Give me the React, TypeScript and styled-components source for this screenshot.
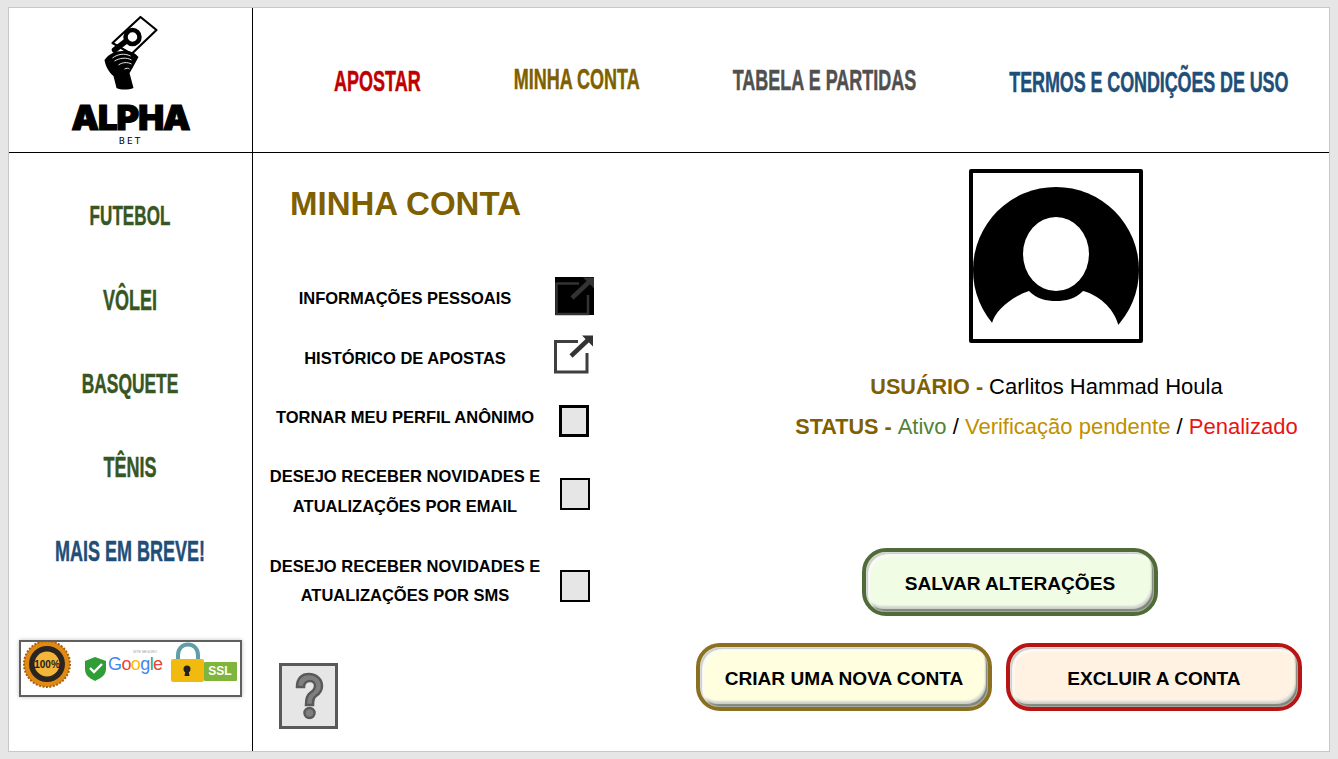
import { type FC } from 'react';
import styled, { createGlobalStyle } from 'styled-components';

const GlobalStyle = createGlobalStyle`
  html, body { margin: 0; padding: 0; background: #e6e6e6; }
  body { font-family: "Liberation Sans", Arial, sans-serif; color: #000; }
`;

const Frame = styled.div`
  box-sizing: border-box;
  width: 1322px;
  height: 745px;
  margin: 7px 0 0 8px;
  background: #fff;
  border: 1px solid #c8c8c8;
  display: grid;
  grid-template-columns: 244px 1fr;
  grid-template-rows: 145px 1fr;
`;

const LogoCell = styled.div`
  border-right: 1px solid #000;
  border-bottom: 1px solid #000;
  display: flex;
  flex-direction: column;
  align-items: center;
`;

const LogoMark = styled.svg`
  width: 70px;
  height: 84px;
  flex: none;
  margin-top: 2px;
`;

const LogoName = styled.div`
  font-family: Inter, "Liberation Sans", sans-serif;
  font-weight: 900;
  font-size: 34.5px;
  line-height: 30px;
  height: 30px;
  margin-top: 9px;
  letter-spacing: -1px;
  -webkit-text-stroke: 1.2px #000;
`;

const LogoSub = styled.div`
  font-family: "DejaVu Sans", sans-serif;
  font-size: 9px;
  line-height: 9px;
  letter-spacing: 2px;
  margin-top: 4px;
`;

const TopNav = styled.nav`
  border-bottom: 1px solid #000;
  display: flex;
  gap: 93px;
  padding: 3px 0 0 81px;
  align-items: center;
`;

// the reference's display face is condensed, so the text is stretched upward
const DisplayText = styled.span<{ $color: string; $nudge?: number; $track?: number; $size?: number }>`
  display: inline-block;
  font-family: "Liberation Sans", sans-serif;
  font-size: ${(p) => p.$size ?? 18}px;
  font-weight: 700;
  color: ${(p) => p.$color};
  letter-spacing: ${(p) => p.$track ?? 0}px;
  white-space: nowrap;
  -webkit-text-stroke: 0.3px ${(p) => p.$color};
  transform: translateY(${(p) => p.$nudge ?? 0}px) scaleY(1.6);
`;

const SideNav = styled.aside`
  border-right: 1px solid #000;
  display: flex;
  flex-direction: column;
  align-items: center;
  padding-top: 52px;
`;

const SideItem = styled(DisplayText)`
  height: 84px;
  line-height: 20px;
  transform-origin: center 10px;
  margin-right: 1px;
`;

const SealBox = styled.div`
  box-sizing: border-box;
  width: 223px;
  height: 57px;
  margin: 15px 0 0 -1px;
  border: 2px solid #5f5f5f;
  box-shadow: 0 0 4px rgba(0, 0, 0, 0.25);
`;

const SealArt = styled.svg`
  display: block;
  width: 219px;
  height: 53px;
`;

const Main = styled.main`
  display: grid;
  grid-template-columns: 443px 1fr;
`;

const AccountColumn = styled.section`
  display: flex;
  flex-direction: column;
  padding-top: 32px;
`;

const Title = styled.h1`
  margin: 0 0 60px 37px;
  font-size: 33px;
  line-height: 38px;
  font-weight: 700;
  color: #7f6000;
`;

const OptionRow = styled.div<{ $height: number }>`
  display: grid;
  grid-template-columns: 304px 1fr;
  height: ${(p) => p.$height}px;
  align-items: start;
`;

const OptionLabel = styled.div<{ $leading?: number; $drop?: number }>`
  text-align: center;
  font-size: 16.5px;
  font-weight: 700;
  line-height: ${(p) => p.$leading ?? 30}px;
  margin-top: ${(p) => p.$drop ?? 0}px;
`;

const Check = styled.div<{ $top: number; $heavy?: boolean }>`
  box-sizing: border-box;
  width: 30px;
  height: 32px;
  margin: ${(p) => p.$top}px 0 0 ${(p) => (p.$heavy ? 2 : 3)}px;
  background: #e6e6e6;
  border: ${(p) => (p.$heavy ? 3 : 2)}px solid #000;
`;

const LinkBox = styled.svg<{ $left: number; $top: number }>`
  display: block;
  width: 40px;
  height: 40px;
  margin: ${(p) => p.$top}px 0 0 ${(p) => p.$left}px;
`;

const HelpBox = styled.div`
  box-sizing: border-box;
  width: 59px;
  height: 66px;
  margin: 53px 0 0 26px;
  background: #e6e6e6;
  border: 3px solid #595959;
  display: flex;
  align-items: center;
  justify-content: center;
`;

const HelpMark = styled.svg`
  width: 30px;
  height: 48px;
`;

const ProfileColumn = styled.section`
  display: flex;
  flex-direction: column;
  align-items: flex-start;
  padding-top: 16px;
`;

const AvatarBox = styled.div`
  box-sizing: border-box;
  width: 174px;
  height: 174px;
  margin-left: 273px;
  border: 4px solid #000;
  border-radius: 2px;
`;

const AvatarArt = styled.svg`
  display: block;
  width: 166px;
  height: 166px;
`;

const InfoBlock = styled.div`
  align-self: stretch;
  margin-left: 68px;
  display: flex;
  flex-direction: column;
  align-items: center;
  gap: 13px;
  margin-top: 31px;
`;

const InfoLine = styled.p<{ $drop?: number }>`
  margin: ${(p) => p.$drop ?? 0}px 0 0;
  font-size: 22px;
  line-height: 26px;
  white-space: nowrap;
`;

const InfoKey = styled.strong`
  font-size: 21.6px;
  color: #7f6000;
`;

const Tone = styled.span<{ $color: string }>`
  color: ${(p) => p.$color};
`;

const ActionArea = styled.div`
  display: flex;
  flex-direction: column;
  align-items: flex-start;
  gap: 27px;
  margin-top: 108px;
`;

const ActionRow = styled.div`
  display: flex;
  gap: 14px;
`;

const ActionButton = styled.button<{ $edge: string; $fill: string; $indent?: number }>`
  box-sizing: border-box;
  width: 296px;
  height: 68px;
  margin-left: ${(p) => p.$indent ?? 0}px;
  border: 4px solid ${(p) => p.$edge};
  border-radius: 24px;
  background: ${(p) => p.$fill};
  font-family: "Liberation Sans", Arial, sans-serif;
  font-size: 19.1px;
  font-weight: 700;
  color: #000;
  padding: 4px 0 0;
  box-shadow:
    inset 0 0 0 1px rgba(255, 255, 255, 0.3),
    inset 2px 2px 1px #c9cdc4,
    inset 4px 4px 2px #fbfbfb,
    inset -2px -3px 1px #7f857a,
    inset -3px -6px 2px #d4d6cf;
`;

const SIDE_ITEMS = [
  { label: 'FUTEBOL', color: '#375623', size: 17, track: 0.1, nudge: 2 },
  { label: 'VÔLEI', color: '#375623', size: 18, track: 0, nudge: 1 },
  { label: 'BASQUETE', color: '#375623', size: 17.4, track: 0, nudge: 0 },
  { label: 'TÊNIS', color: '#375623', size: 18, track: 0, nudge: 0 },
  { label: 'MAIS EM BREVE!', color: '#1f4e79', size: 18, track: 0, nudge: 0 },
];

const LinkIcon: FC<{ left: number; top: number; filled?: boolean }> = ({ left, top, filled }) => (
  <LinkBox $left={left} $top={top} viewBox="0 0 40 40">
    {filled && <rect x="0" y="0" width="39" height="38" fill="#000" />}
    <path
      d="M24 6.5H1.5V37H33V18"
      fill={filled ? 'none' : '#fff'}
      stroke={filled ? '#333' : '#3f3f3f'}
      strokeWidth={filled ? 2.5 : 3}
    />
    <path d="M17 21 34 5" stroke="#333" strokeWidth="4.5" />
    <path d="M28 0.5h11v11z" fill="#333" />
  </LinkBox>
);

const App: FC = () => (
  <>
    <GlobalStyle />
    <Frame>
      <LogoCell>
        <LogoMark viewBox="95.5 10 70 84">
          <path d="M112 43 140 17l16 13-25 24z" fill="#fff" stroke="#000" strokeWidth="2.2" strokeLinejoin="round" />
          <path d="M114 50l13-10" stroke="#000" strokeWidth="5.5" strokeLinecap="round" />
          <circle cx="132" cy="37" r="7" fill="#fff" stroke="#000" strokeWidth="4.5" />
          <path d="M104 60C108 54 115 51 122 51C128 50 134 52 138 57L132 68C130 71 130 72 129 73L133 88C128 90 120 90 116 88L113 76C108 72 105 66 104 60Z" fill="#000" />
          <path d="M112 58c5-4 12-5 18-2M114 61c5-3 12-4 17-1M118 65c4-3 9-3 13-1M124 69c2-1 4-1 5 0" fill="none" stroke="#fff" strokeWidth="0.9" />
        </LogoMark>
        <LogoName>ALPHA</LogoName>
        <LogoSub>BET</LogoSub>
      </LogoCell>
      <TopNav>
        <DisplayText $color="#c00000" $nudge={1}>APOSTAR</DisplayText>
        <DisplayText $color="#7f6000" $nudge={-1}>MINHA CONTA</DisplayText>
        <DisplayText $color="#505050">TABELA E PARTIDAS</DisplayText>
        <DisplayText $color="#1f4e79" $nudge={2} $track={-0.12}>TERMOS E CONDIÇÕES DE USO</DisplayText>
      </TopNav>
      <SideNav>
        {SIDE_ITEMS.map((item) => (
          <SideItem key={item.label} $color={item.color} $size={item.size} $track={item.track} $nudge={item.nudge}>
            {item.label}
          </SideItem>
        ))}
        <SealBox>
          <SealArt viewBox="0 0 219 53">
            <circle cx="26" cy="22" r="23" fill="#e08a14" stroke="#a85f10" strokeWidth="2" strokeDasharray="2 1.5" />
            <circle cx="26" cy="22" r="18" fill="#2a2520" />
            <circle cx="26" cy="22" r="12.5" fill="#f4b63a" />
            <text x="26" y="26" textAnchor="middle" fontFamily="Liberation Sans" fontWeight="700" fontSize="10" fill="#1c1c1c">100%</text>
            <path d="M64 19l10-4 11 4v8c0 6-5 9-11 12-6-3-10-6-10-12z" fill="#2f9e37" />
            <path d="M69 26l4 4 8-8" fill="none" stroke="#fff" strokeWidth="2.4" />
            <text x="112" y="11" fontFamily="Liberation Sans" fontSize="3.5" fill="#999">SITE SEGURO</text>
            <text x="87" y="28" fontFamily="Liberation Sans" fontSize="18" letterSpacing="-0.6">
              <tspan fill="#4285f4">G</tspan><tspan fill="#ea4335">o</tspan><tspan fill="#fbbc05">o</tspan><tspan fill="#4285f4">g</tspan><tspan fill="#34a853">l</tspan><tspan fill="#ea4335">e</tspan>
            </text>
            <path d="M157 18v-5c0-14 20-14 20 0v5" fill="none" stroke="#5f9ea8" strokeWidth="4" />
            <rect x="150" y="17" width="33" height="23" rx="2" fill="#f2b90f" />
            <rect x="183" y="20" width="33" height="19" rx="1" fill="#7fb53a" />
            <circle cx="166" cy="27" r="3.5" fill="#222" />
            <path d="M164.5 28h3l1 6h-5z" fill="#222" />
            <text x="199" y="33" textAnchor="middle" fontFamily="Liberation Sans" fontWeight="700" fontSize="12" fill="#fff">SSL</text>
          </SealArt>
        </SealBox>
      </SideNav>
      <Main>
        <AccountColumn>
          <Title>MINHA CONTA</Title>
          <OptionRow $height={60}>
            <OptionLabel>INFORMAÇÕES PESSOAIS</OptionLabel>
            <LinkIcon left={-2} top={-6} filled />
          </OptionRow>
          <OptionRow $height={59}>
            <OptionLabel>HISTÓRICO DE APOSTAS</OptionLabel>
            <LinkIcon left={-3} top={-8} />
          </OptionRow>
          <OptionRow $height={59}>
            <OptionLabel>TORNAR MEU PERFIL ANÔNIMO</OptionLabel>
            <Check $top={3} $heavy />
          </OptionRow>
          <OptionRow $height={90}>
            <OptionLabel>
              DESEJO RECEBER NOVIDADES E<br />ATUALIZAÇÕES POR EMAIL
            </OptionLabel>
            <Check $top={17} />
          </OptionRow>
          <OptionRow $height={59}>
            <OptionLabel $leading={29} $drop={1}>
              DESEJO RECEBER NOVIDADES E<br />ATUALIZAÇÕES POR SMS
            </OptionLabel>
            <Check $top={19} />
          </OptionRow>
          <HelpBox>
            <HelpMark viewBox="0 0 30 48">
              <path
                d="M3 15C3 6 8 2 15 2s13 5 13 12c0 5-3 8-6 10-3 2-3 5-3 9h-7c0-6 1-10 4-12 3-2 5-4 5-7 0-3-2-5-5-5s-6 2-6 6z"
                fill="#7f7f7f"
                stroke="#595959"
                strokeWidth="2.5"
              />
              <circle cx="15.5" cy="41" r="5" fill="#7f7f7f" stroke="#595959" strokeWidth="2.5" />
            </HelpMark>
          </HelpBox>
        </AccountColumn>
        <ProfileColumn>
          <AvatarBox>
            <AvatarArt viewBox="0 0 166 166">
              <circle cx="83" cy="97" r="83" fill="#000" />
              <path d="M19 150C22 138 38 124 56 118C64 126 73 128 83 128C93 128 102 126 110 118C125 122 140 134 145 151L147 166L19 166Z" fill="#fff" />
              <ellipse cx="83" cy="81" rx="33" ry="37" fill="#fff" />
            </AvatarArt>
          </AvatarBox>
          <InfoBlock>
            <InfoLine>
              <InfoKey>USUÁRIO - </InfoKey>Carlitos Hammad Houla
            </InfoLine>
            <InfoLine $drop={1}>
              <InfoKey>STATUS - </InfoKey>
              <Tone $color="#548235">Ativo</Tone> / <Tone $color="#bf9000">Verificação pendente</Tone> /{' '}
              <Tone $color="#e81414">Penalizado</Tone>
            </InfoLine>
          </InfoBlock>
          <ActionArea>
            <ActionButton $edge="#4f6b37" $fill="#f1fce5" $indent={166}>SALVAR ALTERAÇÕES</ActionButton>
            <ActionRow>
              <ActionButton $edge="#8a7020" $fill="#ffffdf">CRIAR UMA NOVA CONTA</ActionButton>
              <ActionButton $edge="#b81414" $fill="#fff2e3">EXCLUIR A CONTA</ActionButton>
            </ActionRow>
          </ActionArea>
        </ProfileColumn>
      </Main>
    </Frame>
  </>
);

export default App;
